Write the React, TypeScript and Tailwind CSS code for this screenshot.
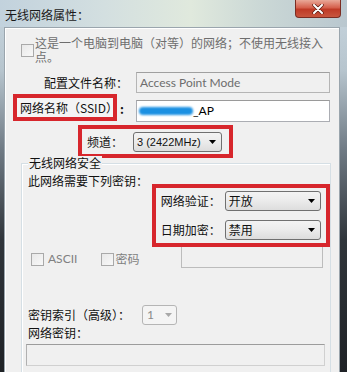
import React from 'react';

function Arrow({ color = '#000' }: { color?: string }) {
  return (
    <svg width="7" height="4" viewBox="0 0 7 4">
      <path d="M0 0h7L3.5 4z" fill={color} />
    </svg>
  );
}

function Combo({ text, className, latin }: { text: string; className: string; latin?: boolean }) {
  return (
    <div
      className={`flex items-center justify-between rounded-[3px] border border-[#707070] bg-gradient-to-b from-[#f3f3f3] via-[#ebebeb] to-[#dddddd] pl-[3px] pr-[5px] ${className}`}
    >
      <span className={latin ? "font-['Liberation_Sans',sans-serif] text-[11px]" : ''}>{text}</span>
      <Arrow />
    </div>
  );
}

function CheckBox() {
  return <div className="h-[13px] w-[13px] shrink-0 border border-[#a9a9a9] bg-gradient-to-br from-[#e8e8e8] to-[#f8f8f8]" />;
}

function App() {
  return (
    <div className="flex h-[372px] w-[347px] flex-col overflow-hidden bg-[linear-gradient(to_bottom,#c8d6df_0px,#b7c5ce_70px,#6f7a84_150px,#30353b_240px,#1f2226_372px)] font-['Noto_Sans_CJK_SC',sans-serif] text-[12px] leading-[14px] text-[#111]">
      {/* title bar */}
      <div className="relative flex h-[27px] shrink-0 items-center bg-[linear-gradient(to_right,#c2d2dd,#d3dfe0_30%,#e0e9dd_55%,#cbd8d6_75%,#b9c7cf)] pl-[5px] pt-[2px]">
        <span className="text-[12px] text-[#1a1a1a]">无线网络属性：</span>
        <div className="absolute right-[6px] top-0 flex h-[18px] w-[46px] items-center justify-center rounded-b-[4px] border border-t-0 border-[#7a2c22] bg-[linear-gradient(to_bottom,#e9a898,#d5604c_45%,#bf3a26_55%,#c8553e)]">
          <svg width="12" height="10" viewBox="0 0 12 10">
            <path d="M2 1l8 8M10 1l-8 8" stroke="#5a1a10" strokeWidth="3.4" strokeLinecap="round" />
            <path d="M2 1l8 8M10 1l-8 8" stroke="#fff" strokeWidth="2" strokeLinecap="round" />
          </svg>
        </div>
      </div>

      {/* panel */}
      <div className="ml-[4px] flex w-[336px] flex-1 flex-col border-l border-r border-t border-[#9aa5ad] bg-[#f0f0f0] shadow-[inset_1px_1px_0_#fff]">
        {/* ad hoc checkbox */}
        <div className="ml-[16px] mt-[8px] flex items-center gap-[1px] text-[#6e6e6e]">
          <CheckBox />
          <p className="w-[292px]">这是一个电脑到电脑（对等）的网络；不使用无线接入点。</p>
        </div>

        {/* profile name */}
        <div className="mt-[8px] flex items-center">
          <span className="w-[123px] text-right">配置文件名称：</span>
          <div className="ml-[8px] flex h-[21px] w-[194px] items-center border border-[#b5b5b5] border-t-[#a0a0a0] bg-[#f0f0f0] pl-[3px] font-['Lato',sans-serif] text-[12px] text-[#6d6d6d]">
            Access Point Mode
          </div>
        </div>

        {/* SSID */}
        <div className="mt-[1px] flex items-start">
          <div className="ml-[8px] flex h-[27px] w-[104px] items-center border-4 border-[#d7262c] bg-[#f4f4f4] pl-[3px]">
            网络名称（SSID）
          </div>
          <span className="w-[19px] pl-[3px] pt-[8px] font-bold">:</span>
          <div className="mt-[6px] flex h-[22px] w-[194px] items-center border border-[#abadb3] border-t-[#9a9a9a] bg-white">
            <span className="ml-[2px] h-[8px] w-[54px] rounded-full bg-[#1b90e2] blur-[1px]" />
            <span className="font-['Lato',sans-serif] text-[12px] text-black">_AP</span>
          </div>
        </div>

        {/* channel */}
        <div className="ml-[73px] mt-[3px] flex h-[33px] w-[155px] items-center border-4 border-[#d7262c] pl-[5px]">
          <span className="w-[46px]">频道：</span>
          <Combo text="3 (2422MHz)" latin className="h-[20px] w-[89px]" />
        </div>

        {/* security group */}
        <div className="ml-[16px] mt-[5px] flex w-[310px] flex-1 flex-col border border-b-0 border-[#d5dfe5] shadow-[inset_1px_1px_0_#fff]">
          <span className="-mt-[8px] ml-[6px] w-fit bg-[#f0f0f0] px-px">无线网络安全</span>
          <div className="flex items-start">
            <span className="ml-[6px] mt-[4px] w-[126px]">此网络需要下列密钥：</span>
            <div className="relative z-10 mt-[14px] flex h-[63px] w-[181px] flex-col justify-center gap-[9px] border-4 border-[#d7262c] bg-[#f0f0f0] pl-[5px]">
              <div className="flex items-center">
                <span className="w-[64px]">网络验证：</span>
                <Combo text="开放" className="h-[20px] w-[96px]" />
              </div>
              <div className="flex items-center">
                <span className="w-[64px]">日期加密：</span>
                <Combo text="禁用" className="h-[20px] w-[96px]" />
              </div>
            </div>
          </div>

          <div className="flex items-start">
            <div className="flex w-[159px] items-center pl-[9px] pt-[5px] text-[#808080]">
              <CheckBox />
              <span className="ml-[4px] font-['Lato',sans-serif] text-[12px]">ASCII</span>
              <div className="ml-[24px] flex items-center">
                <CheckBox />
                <span className="ml-px">密码</span>
              </div>
            </div>
            <div className="-mt-px h-[22px] w-[142px] border border-t-0 border-[#bcbcbc]" />
          </div>

          <div className="ml-[6px] mt-[37px] flex items-center">
            <span className="w-[114px]">密钥索引（高级）：</span>
            <div className="flex h-[20px] w-[35px] items-center justify-between rounded-[3px] border border-[#b5b5b5] bg-[#f4f4f4] pl-[4px] pr-[4px] font-['Lato',sans-serif] text-[12px] text-[#8a8a8a]">
              1
              <Arrow color="#a8a8a8" />
            </div>
          </div>
          <span className="ml-[6px] mt-[1px]">网络密钥：</span>
          <div className="ml-[4px] mt-[4px] h-[22px] w-[299px] border border-[#d0d0d0] border-l-[#b0b0b0] border-t-[#9c9c9c] bg-[#f0f0f0]" />
        </div>
      </div>
    </div>
  );
}

export default App;
